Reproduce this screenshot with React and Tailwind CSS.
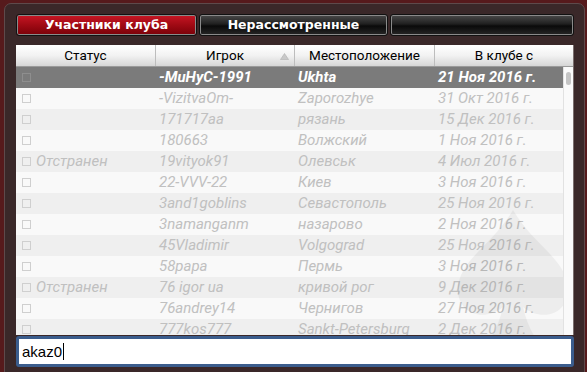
import React from 'react'

const rows = [
  { status: '', player: '-MuHyC-1991', place: 'Ukhta', date: '21 Ноя 2016 г.', selected: true },
  { status: '', player: '-VizitvaOm-', place: 'Zaporozhye', date: '31 Окт 2016 г.' },
  { status: '', player: '171717aa', place: 'рязань', date: '15 Дек 2016 г.' },
  { status: '', player: '180663', place: 'Волжский', date: '1 Ноя 2016 г.' },
  { status: 'Отстранен', player: '19vityok91', place: 'Олевськ', date: '4 Июл 2016 г.' },
  { status: '', player: '22-VVV-22', place: 'Киев', date: '3 Ноя 2016 г.' },
  { status: '', player: '3and1goblins', place: 'Севастополь', date: '25 Ноя 2016 г.' },
  { status: '', player: '3namanganm', place: 'назарово', date: '2 Ноя 2016 г.' },
  { status: '', player: '45Vladimir', place: 'Volgograd', date: '25 Ноя 2016 г.' },
  { status: '', player: '58papa', place: 'Пермь', date: '3 Ноя 2016 г.' },
  { status: 'Отстранен', player: '76 igor ua', place: 'кривой рог', date: '9 Дек 2016 г.' },
  { status: '', player: '76andrey14', place: 'Чернигов', date: '27 Ноя 2016 г.' },
  { status: '', player: '777kos777', place: 'Sankt-Petersburg', date: '2 Дек 2016 г.' },
]

const font = { fontFamily: 'Roboto, "DejaVu Sans", sans-serif' }

function Tab({ label, active, className }) {
  return (
    <div
      className={
        'h-[22px] rounded-[3px] border border-[#111] shadow-[inset_0_0_0_1px_#8a8a8a] flex items-center justify-center text-[12.5px] font-bold text-white ' +
        (active
          ? 'bg-[linear-gradient(#c81624,#a00a14_50%,#7a0008)] '
          : 'bg-[linear-gradient(#4a4a4a,#202020_45%,#0a0a0a_55%,#262626)] ') +
        className
      }
      style={{ fontFamily: '"DejaVu Sans", Verdana, sans-serif' }}
    >
      {label}
    </div>
  )
}

function HeaderCell({ children, className }) {
  return (
    <div className={'h-full flex items-center justify-center border-r border-[#bdbdbd] text-[13.5px] text-black ' + className}>
      {children}
    </div>
  )
}

export default function App() {
  return (
    <div className="w-[587px] h-[372px] overflow-hidden bg-[#561a1c] pt-[3px] pl-[4px] pr-[2px]">
      <div className="h-[380px] rounded-tl-[7px] rounded-tr-[7px] bg-[#3a2829] border border-[#5e4a4b] pt-[10px] pl-[11px] pr-[8px]">
        <div className="flex gap-[2px] w-[558px]">
          <Tab label="Участники клуба" active className="w-[181px]" />
          <Tab label="Нерассмотренные" className="w-[189px]" />
          <Tab label="" className="flex-1" />
        </div>

        <div className="mt-[9px] w-[558px] bg-[#7a6e6e] pr-[1px]">
          <div className="h-[22px] flex bg-[linear-gradient(#ffffff,#f2f2f2_50%,#d6d6d6)] border-b border-[#9a9a9a]" style={font}>
            <HeaderCell className="w-[140px]">Статус</HeaderCell>
            <HeaderCell className="w-[139px] relative">
              Игрок
              <svg className="absolute right-[5px] top-[8px]" width="9" height="7" viewBox="0 0 9 7">
                <path d="M4.5 0.5 L8.5 6.5 L0.5 6.5 Z" fill="#c8c8c8" stroke="#b0b0b0" strokeWidth="0.6" />
              </svg>
            </HeaderCell>
            <HeaderCell className="w-[140px]">Местоположение</HeaderCell>
            <HeaderCell className="flex-1 border-r-0">В клубе с</HeaderCell>
          </div>

          <div className="h-[268px] flex overflow-hidden bg-[#f8f8f8]">
            <div className="flex-1 relative overflow-hidden">
              <svg className="absolute right-[-10px] bottom-[-20px] opacity-[0.045]" width="120" height="150" viewBox="0 0 120 150">
                <path d="M60 5 C40 40 5 55 5 85 C5 108 30 118 50 102 C46 120 38 135 28 145 L92 145 C82 135 74 120 70 102 C90 118 115 108 115 85 C115 55 80 40 60 5 Z" fill="#000" />
              </svg>
              {rows.map((r, i) => (
                <div
                  key={i}
                  className={
                    'h-[21px] flex items-center text-[15px] italic leading-none ' +
                    (r.selected
                      ? 'bg-[#7b7b7b] text-white font-bold'
                      : i % 2 === 0
                      ? 'bg-[#ededed]/90 text-[#c0c0c0]'
                      : 'bg-[#f8f8f8]/90 text-[#c0c0c0]')
                  }
                  style={font}
                >
                  <div className="w-[140px] flex items-center pl-[6px]">
                    <span className={'w-[9px] h-[9px] border ' + (r.selected ? 'border-[#8e8e8e]' : 'border-[#cfcfcf]')} />
                    <span className="ml-[5px] font-normal">{r.status}</span>
                  </div>
                  <div className="w-[139px] pl-[3px] whitespace-nowrap">{r.player}</div>
                  <div className="w-[140px] pl-[3px] whitespace-nowrap">{r.place}</div>
                  <div className="flex-1 pl-[3px] whitespace-nowrap">{r.date}</div>
                </div>
              ))}
            </div>
            <div className="w-[10px] bg-[#fafafa] border-l border-[#e2e2e2] pt-[5px] flex justify-center">
              <div className="w-[5px] h-[13px] rounded-full bg-[#c4c4c4]" />
            </div>
          </div>
        </div>

        <div className="mt-[1px] w-[558px] h-[31px] rounded-[3px] border-[3px] border-[#3b5d8d] bg-white flex items-center pl-[3px]">
          <span className="text-[15px] text-black leading-none" style={{ fontFamily: '"Liberation Sans", Arial, sans-serif' }}>akaz0</span>
          <span className="w-[1px] h-[17px] bg-black ml-[1px]" />
        </div>
      </div>
    </div>
  )
}
